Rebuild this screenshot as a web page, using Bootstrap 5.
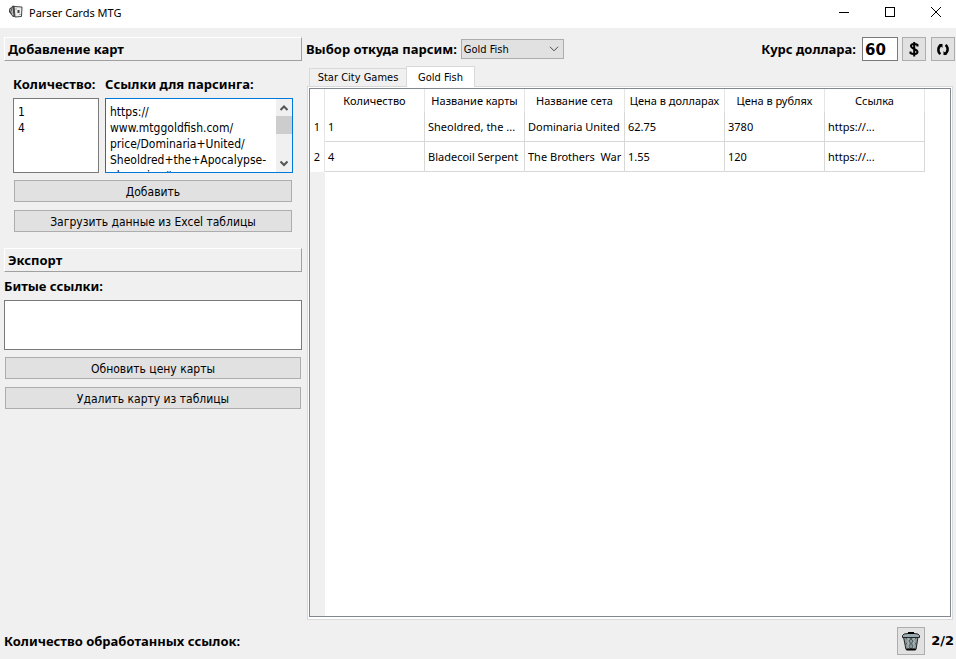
<!DOCTYPE html>
<html lang="ru">
<head>
<meta charset="utf-8">
<meta name="viewport" content="width=device-width, initial-scale=1">
<title>Parser Cards MTG</title>
<link rel="stylesheet" href="https://cdn.jsdelivr.net/npm/bootstrap@5.3.0/dist/css/bootstrap.min.css">
<style>
  body { background: #f0f0f0; color: #000; font: 12px/16px "DejaVu Sans Condensed", "DejaVu Sans", sans-serif; }
  .ui-sans { font-family: "Noto Sans", sans-serif; font-size: 11px; }
  .ui-bold { font-family: "Noto Sans", sans-serif; font-weight: 700; font-size: 13px; line-height: 16px; white-space: nowrap; }
  .ui-digits { font-family: "DejaVu Sans", sans-serif; font-weight: 700; font-size: 13px; }
  .ui-small { font-family: "DejaVu Sans Condensed", "DejaVu Sans", sans-serif; font-size: 11px; }
  .titlebar { height: 28px; padding: 0 3px 0 8px; }
  .title-text { padding: 5px 0 0 5px; }
  .win-btn { width: 34px; height: 24px; }
  .win-btns { gap: 12px; }
  .workspace { padding: 9px 1px 4px 4px; }
  .side { width: 298px; }
  .section-head { height: 24px; line-height: 22px; margin: 0; padding: 0 3px; border: 1px solid; border-color: #fff #a0a0a0 #a0a0a0 #fff; }
  .entry { padding: 15px 9px 16px; }
  .pair { gap: 6px; }
  .entry-fields { margin-top: 6px; }
  .count-col { width: 86px; }
  .field-box { border: 1px solid #7a7a7a; background: #fff; border-radius: 0; }
  .field-box.tall { height: 75px; }
  .field-box.short { height: 50px; }
  .field-box.active { border-color: #0078d7; }
  .plain-area { border: 0; outline: 0; resize: none; overflow: hidden; background: transparent; color: #000; padding: 5px 0 0 4px; line-height: 16px; white-space: pre; }
  .scroller { width: 16px; background: #f0f0f0; }
  .scroll-thumb { height: 18px; background: #cdcdcd; }
  .stack { gap: 8px; padding: 7px 1px 0; }
  .push { height: 22px; border: 1px solid #adadad; background: #e1e1e1; color: #000; padding: 2px 0 0; line-height: 18px; text-align: center; }
  .broken-label { margin: 6px 0; }
  .tool { width: 24px; height: 24px; border: 1px solid #adadad; background: #e1e1e1; color: #000; padding: 0; }
  .tool.bin { width: 28px; height: 28px; }
  .tools { gap: 5px; }
  .source { width: 103px; height: 20px; padding: 1px 2px 0; border: 1px solid #adadad; border-radius: 0; color: #000; line-height: 18px; appearance: none;
    background: #e1e1e1 url("data:image/svg+xml,%3Csvg xmlns='http://www.w3.org/2000/svg' width='10' height='6'%3E%3Cpath d='M1 .8l4 4 4-4' fill='none' stroke='%23444'/%3E%3C/svg%3E") no-repeat right 4px center; }
  .rate { width: 36px; height: 24px; padding: 2px 2px 0; font-size: 15px; line-height: 20px; }
  .rate-label { margin-right: 6px; }
  .top-row { height: 24px; }
  .tabs-row { padding-left: 3px; margin-top: 5px; }
  .tab-btn { border: 1px solid #d9d9d9; border-bottom: 0; background: #f0f0f0; color: #000; height: 18px; padding: 0; line-height: 17px; width: 98px; white-space: nowrap; }
  .tab-btn.active { background: #fff; height: 21px; width: 69px; line-height: 19px; margin: 0 0 -1px -1px; z-index: 1; }
  .pane { border: 1px solid #d9d9d9; background: #fff; padding: 1px 1px 2px; margin: 0 2px 0 1px; }
  .pane-in { border: 1px solid #828790; }
  .sheet { table-layout: fixed; width: 615px; border-collapse: separate; border-spacing: 0; line-height: 16px; }
  .sheet .num { width: 15px; }
  .sheet th, .sheet td { font-weight: 400; padding: 0 0 0 3px; border-right: 1px solid #d8d8d8; white-space: pre; }
  .sheet thead th { height: 23px; text-align: center; padding: 0; border-color: #e5e5e5; }
  .sheet tbody th { padding: 0; text-align: center; border-color: #e5e5e5; }
  .sheet tbody td { height: 30px; border-bottom: 1px solid #d8d8d8; }
  .sheet a { color: inherit; text-decoration: none; }
  .gutter { width: 15px; background: #f0f0f0; }
  .status { height: 28px; margin-top: 7px; gap: 6px; padding-right: 1px; }
</style>
</head>
<body>
<div class="min-vh-100 d-flex flex-column">
  <header class="titlebar bg-white d-flex align-items-start">
    <svg class="mt-1" width="16" height="16" viewBox="0 0 16 16" aria-hidden="true">
      <path d="M1 5l4-3.500 2 .500v11H5L1 8z" fill="#444"/>
      <path d="M2 5l3 6M4 3.500l1 8" stroke="#bbb" fill="none"/>
      <path d="M6 2.500l8 .500-.500 9.500L7 13z" fill="#eee" stroke="#444"/>
      <path d="M9.500 6h2v3h-2z" fill="#444"/><path d="M8 4.500v1M12 10v1" stroke="#666"/>
    </svg>
    <span class="ui-sans title-text">Parser Cards MTG</span>
    <div class="ms-auto d-flex win-btns">
      <button class="win-btn btn p-0 border-0 d-flex align-items-center justify-content-center" aria-label="Свернуть"><svg width="12" height="12"><path d="M1 6.500h10" stroke="#000"/></svg></button>
      <button class="win-btn btn p-0 border-0 d-flex align-items-center justify-content-center" aria-label="Развернуть"><svg width="12" height="12"><rect x="1.500" y="1.500" width="9" height="9" fill="none" stroke="#000"/></svg></button>
      <button class="win-btn btn p-0 border-0 d-flex align-items-center justify-content-center" aria-label="Закрыть"><svg width="12" height="12"><path d="M1 1l10 10M11 1L1 11" stroke="#000"/></svg></button>
    </div>
  </header>

  <main class="workspace flex-grow-1 d-flex flex-column">
    <div class="flex-grow-1 d-flex gap-1">
      <section class="side flex-shrink-0">
        <h2 class="section-head ui-bold">Добавление карт</h2>
        <div class="entry">
          <div class="d-flex pair">
            <label class="ui-bold count-col flex-shrink-0" for="counts">Количество:</label>
            <label class="ui-bold" for="links">Ссылки для парсинга:</label>
          </div>
          <div class="d-flex pair entry-fields">
            <div class="field-box tall count-col d-flex flex-shrink-0"><textarea id="counts" class="plain-area w-100">1
4</textarea></div>
            <div class="field-box tall active d-flex flex-grow-1">
              <textarea id="links" class="plain-area flex-grow-1 w-100">https://
www.mtggoldfish.com/
price/Dominaria+United/
Sheoldred+the+Apocalypse-
phyrexian#paper</textarea>
              <div class="scroller flex-shrink-0 d-flex flex-column align-items-center" aria-hidden="true">
                <svg width="16" height="17"><path d="M4.500 11L8 7.500l3.500 3.500" fill="none" stroke="#555" stroke-width="2"/></svg>
                <div class="scroll-thumb w-100"></div>
                <svg class="mt-auto" width="16" height="17"><path d="M4.500 6.500L8 10l3.500-3.500" fill="none" stroke="#555" stroke-width="2"/></svg>
              </div>
            </div>
          </div>
          <div class="d-grid stack">
            <button class="push">Добавить</button>
            <button class="push">Загрузить данные из Excel таблицы</button>
          </div>
        </div>
        <h2 class="section-head ui-bold">Экспорт</h2>
        <label class="ui-bold d-block broken-label" for="broken">Битые ссылки:</label>
        <div class="field-box short d-flex"><textarea id="broken" class="plain-area w-100"></textarea></div>
        <div class="d-grid stack">
          <button class="push">Обновить цену карты</button>
          <button class="push">Удалить карту из таблицы</button>
        </div>
      </section>

      <section class="flex-grow-1 d-flex flex-column">
        <div class="top-row d-flex align-items-center">
          <label class="ui-bold me-1" for="source">Выбор откуда парсим:</label>
          <select id="source" class="source ui-small"><option>Gold Fish</option><option>Star City Games</option></select>
          <label class="ui-bold rate-label ms-auto" for="rate">Курс доллара:</label>
          <input id="rate" class="rate field-box ui-digits me-1" value="60">
          <div class="tools d-flex">
            <button class="tool d-flex align-items-center justify-content-center" aria-label="Курс"><svg width="12" height="18" viewBox="0 0 12 18"><path d="M9.500 6.500V5C8 3.500 3 3.500 3 6c0 3 6.500 3 6.500 6 0 2.500-5 2.500-7 1.200V11.500M6.200 2v14.500" fill="none" stroke="#000" stroke-width="2"/></svg></button>
            <button class="tool d-flex align-items-center justify-content-center" aria-label="Обновить"><svg width="14" height="14" viewBox="0 0 14 14"><path d="M5.500 3C1.500 4.500 1.500 10 4.500 12M8.500 12c4-1.500 4-7 1-9" fill="none" stroke="#000" stroke-width="2.500"/><path d="M3 2h3.500v4zM11 13H7.500V9z"/></svg></button>
          </div>
        </div>
        <div class="tabs-row d-flex align-items-end ui-small" role="tablist">
          <button class="tab-btn" role="tab" aria-selected="false">Star City Games</button>
          <button class="tab-btn active position-relative" role="tab" aria-selected="true">Gold Fish</button>
        </div>
        <div class="pane flex-grow-1 d-flex">
          <div class="pane-in flex-grow-1 d-flex flex-column">
            <table class="sheet ui-sans">
              <colgroup><col class="num"><col span="6"></colgroup>
              <thead><tr><th></th><th>Количество</th><th>Название карты</th><th>Название сета</th><th>Цена в долларах</th><th>Цена в рублях</th><th>Ссылка</th></tr></thead>
              <tbody>
                <tr><th>1</th><td>1</td><td>Sheoldred, the ...</td><td>Dominaria United</td><td>62.75</td><td>3780</td><td><a href="#">https://...</a></td></tr>
                <tr><th>2</th><td>4</td><td>Bladecoil Serpent</td><td>The Brothers  War</td><td>1.55</td><td>120</td><td><a href="#">https://...</a></td></tr>
              </tbody>
            </table>
            <div class="gutter flex-grow-1"></div>
          </div>
        </div>
      </section>
    </div>
    <footer class="status d-flex align-items-center">
      <span class="ui-bold">Количество обработанных ссылок:</span>
      <button class="tool bin ms-auto d-flex align-items-center justify-content-center" aria-label="Удалить">
        <svg width="20" height="20" viewBox="0 0 20 20"><path d="M2.500 6h14.500l-2 12.500H5z" fill="#8c999c" stroke="#222"/><path d="M5 7l9 10M9 7l6 6M5 12l5 6M15 7l-9 10M11 7l-6 6M15 12l-5 6" stroke="#4d5a5e"/><path d="M7 7v10M13 7v10" stroke="#c5d0d2"/><path d="M1.500 4.500Q2 2.500 7 2.500L8 1.500h4l1 1q5 0 5.500 2v2h-17z" fill="#9aabaf" stroke="#222"/><path d="M7 2h6M5.500 18.500h9" stroke="#000" stroke-width="2"/></svg>
      </button>
      <span class="ui-digits">2/2</span>
    </footer>
  </main>
</div>
<script src="https://cdn.jsdelivr.net/npm/bootstrap@5.3.0/dist/js/bootstrap.bundle.min.js"></script>
</body>
</html>
